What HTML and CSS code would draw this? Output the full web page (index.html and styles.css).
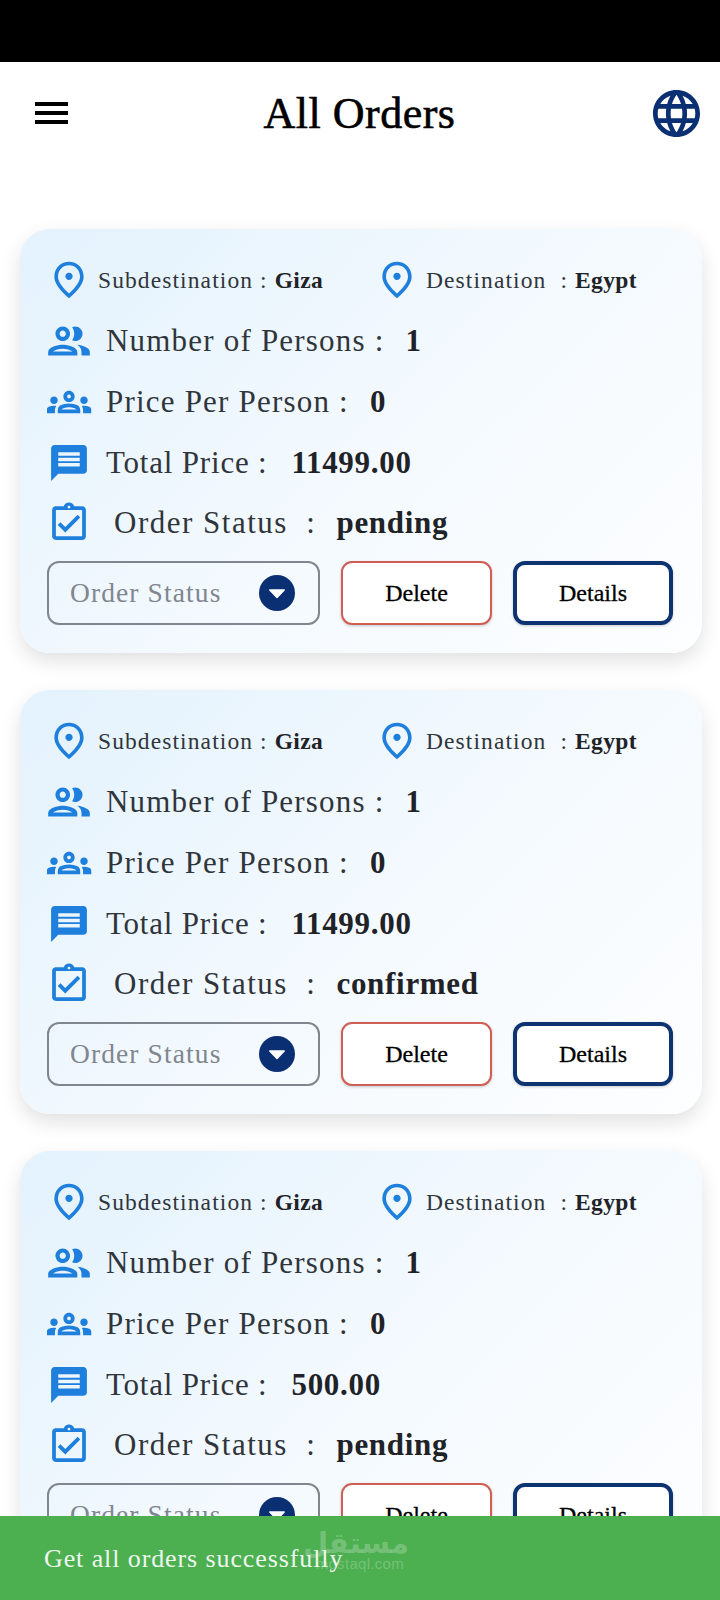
FILE: index.html
```html
<!DOCTYPE html>
<html lang="en">
<head>
<meta charset="utf-8">
<title>All Orders</title>
<link rel="stylesheet" href="styles.css">
</head>
<body>
<svg class="defs" width="0" height="0" aria-hidden="true">
  <symbol id="i-pin" viewBox="0 0 24 24"><path d="M12 12c-1.1 0-2-.9-2-2s.9-2 2-2 2 .9 2 2-.9 2-2 2zm6-1.8C18 6.57 15.35 4 12 4s-6 2.57-6 6.2c0 2.34 1.95 5.44 6 9.14 4.05-3.7 6-6.8 6-9.14zM12 2c4.2 0 8 3.22 8 8.2 0 3.32-2.67 7.25-8 11.8-5.33-4.55-8-8.48-8-11.8C4 5.22 7.8 2 12 2z"/></symbol>
  <symbol id="i-group" viewBox="0 0 24 24"><path d="M9 13.75c-2.34 0-7 1.17-7 3.5V19h14v-1.75c0-2.33-4.66-3.5-7-3.5zM4.34 17c.84-.58 2.87-1.25 4.66-1.25s3.82.67 4.66 1.25H4.34zM9 12c1.93 0 3.5-1.57 3.5-3.5S10.93 5 9 5 5.5 6.57 5.5 8.5 7.07 12 9 12zm0-5c.83 0 1.5.67 1.5 1.5S9.83 10 9 10s-1.5-.67-1.5-1.5S8.17 7 9 7zm7.04 6.81c1.16.84 1.96 1.96 1.96 3.44V19h4v-1.75c0-2.02-3.5-3.17-5.96-3.44zM15 12c1.93 0 3.5-1.57 3.5-3.5S16.93 5 15 5c-.54 0-1.04.13-1.5.35.63.89 1 1.98 1 3.15s-.37 2.26-1 3.15c.46.22.96.35 1.5.35z"/></symbol>
  <symbol id="i-groups" viewBox="0 0 24 24"><path d="M4 13c1.1 0 2-.9 2-2s-.9-2-2-2-2 .9-2 2 .9 2 2 2zm1.13 1.1c-.37-.06-.74-.1-1.13-.1-.99 0-1.93.21-2.78.58C.48 14.9 0 15.62 0 16.43V18h4.5v-1.61c0-.83.23-1.61.63-2.29zM20 13c1.1 0 2-.9 2-2s-.9-2-2-2-2 .9-2 2 .9 2 2 2zm4 3.43c0-.81-.48-1.53-1.22-1.85-.85-.37-1.79-.58-2.78-.58-.39 0-.76.04-1.13.1.4.68.63 1.46.63 2.29V18H24v-1.57zm-7.76-2.78c-1.17-.52-2.61-.9-4.24-.9-1.63 0-3.07.39-4.24.9C6.68 14.13 6 15.21 6 16.39V18h12v-1.61c0-1.18-.68-2.26-1.76-2.74zM8.07 16c.09-.23.13-.39.91-.69.97-.38 1.99-.56 3.02-.56s2.05.18 3.02.56c.77.3.81.46.91.69H8.07zM12 8c.55 0 1 .45 1 1s-.45 1-1 1-1-.45-1-1 .45-1 1-1m0-2c-1.66 0-3 1.34-3 3s1.34 3 3 3 3-1.34 3-3-1.34-3-3-3z"/></symbol>
  <symbol id="i-message" viewBox="0 0 24 24"><path d="M20 2H4c-1.1 0-1.99.9-1.99 2L2 22l4-4h14c1.1 0 2-.9 2-2V4c0-1.1-.9-2-2-2zm-2 12H6v-2h12v2zm0-3H6V9h12v2zm0-3H6V6h12v2z"/></symbol>
  <symbol id="i-check" viewBox="0 0 24 24"><path d="M18 9l-1.41-1.42L10 14.17l-2.59-2.58L6 13l4 4zm1-6h-4.18C14.4 1.84 13.3 1 12 1c-1.3 0-2.4.84-2.82 2H5c-.14 0-.27.01-.4.04-.39.08-.74.28-1.01.55-.18.18-.33.4-.43.64-.1.23-.16.49-.16.77v14c0 .27.06.54.16.78s.25.45.43.64c.27.27.62.47 1.01.55.13.02.26.03.4.03h14c1.1 0 2-.9 2-2V5c0-1.1-.9-2-2-2zm-7-.25c.41 0 .75.34.75.75s-.34.75-.75.75-.75-.34-.75-.75.34-.75.75-.75zM19 19H5V5h14v14z"/></symbol>
  <symbol id="i-caret" viewBox="0 0 24 24"><circle cx="12" cy="12" r="12" fill="#0a2f73"/><path d="M7.2 10h9.6L12 15z" fill="#fff" stroke="#fff" stroke-width="1" stroke-linejoin="round"/></symbol>
</svg>

<div class="status-bar"></div>

<header class="app-bar">
  <div class="menu"><span></span><span></span><span></span></div>
  <h1 class="title">All Orders</h1>
  <svg class="globe" viewBox="2 2 20 20"><path d="M11.99 2C6.47 2 2 6.48 2 12s4.47 10 9.99 10C17.52 22 22 17.52 22 12S17.52 2 11.99 2zm6.93 6h-2.95c-.32-1.25-.78-2.45-1.38-3.56 1.84.63 3.37 1.91 4.33 3.56zM12 4.04c.83 1.2 1.48 2.53 1.91 3.96h-3.82c.43-1.43 1.08-2.76 1.91-3.96zM4.26 14C4.1 13.36 4 12.69 4 12s.1-1.36.26-2h3.38c-.08.66-.14 1.32-.14 2 0 .68.06 1.34.14 2H4.26zm.82 2h2.95c.32 1.25.78 2.45 1.38 3.56-1.84-.63-3.37-1.9-4.33-3.56zm2.95-8H5.08c.96-1.66 2.49-2.93 4.33-3.56C8.81 5.55 8.35 6.75 8.03 8zM12 19.96c-.83-1.2-1.48-2.53-1.91-3.96h3.82c-.43 1.43-1.08 2.76-1.91 3.96zM14.34 14H9.66c-.09-.66-.16-1.32-.16-2 0-.68.07-1.35.16-2h4.68c.09.65.16 1.32.16 2 0 .68-.07 1.34-.16 2zm.25 5.56c.6-1.11 1.06-2.31 1.38-3.56h2.95c-.96 1.65-2.49 2.93-4.33 3.56zM16.36 14c.08-.66.14-1.32.14-2 0-.68-.06-1.34-.14-2h3.38c.16.64.26 1.31.26 2s-.1 1.36-.26 2h-3.38z"/></svg>
</header>

<main class="orders">
  <article class="card">
    <div class="row places">
      <div class="place"><svg class="ic ic-pin"><use href="#i-pin"/></svg><span class="small">Subdestination : <b>Giza</b></span></div>
      <div class="place"><svg class="ic ic-pin"><use href="#i-pin"/></svg><span class="small">Destination &nbsp;: <b>Egypt</b></span></div>
    </div>
    <div class="row"><svg class="ic ic-group"><use href="#i-group"/></svg><span class="label">Number of Persons :</span><b class="value">1</b></div>
    <div class="row"><svg class="ic ic-groups"><use href="#i-groups"/></svg><span class="label">Price Per Person :</span><b class="value">0</b></div>
    <div class="row total"><svg class="ic ic-message"><use href="#i-message"/></svg><span class="label label-tight">Total Price :</span><b class="value">11499.00</b></div>
    <div class="row status"><svg class="ic ic-check"><use href="#i-check"/></svg><span class="label label-wide">Order Status &nbsp;:</span><b class="value">pending</b></div>
    <div class="controls">
      <div class="select"><span>Order Status</span><svg class="caret"><use href="#i-caret"/></svg></div>
      <button class="btn btn-delete">Delete</button>
      <button class="btn btn-details">Details</button>
    </div>
  </article>

  <article class="card">
    <div class="row places">
      <div class="place"><svg class="ic ic-pin"><use href="#i-pin"/></svg><span class="small">Subdestination : <b>Giza</b></span></div>
      <div class="place"><svg class="ic ic-pin"><use href="#i-pin"/></svg><span class="small">Destination &nbsp;: <b>Egypt</b></span></div>
    </div>
    <div class="row"><svg class="ic ic-group"><use href="#i-group"/></svg><span class="label">Number of Persons :</span><b class="value">1</b></div>
    <div class="row"><svg class="ic ic-groups"><use href="#i-groups"/></svg><span class="label">Price Per Person :</span><b class="value">0</b></div>
    <div class="row total"><svg class="ic ic-message"><use href="#i-message"/></svg><span class="label label-tight">Total Price :</span><b class="value">11499.00</b></div>
    <div class="row status"><svg class="ic ic-check"><use href="#i-check"/></svg><span class="label label-wide">Order Status &nbsp;:</span><b class="value">confirmed</b></div>
    <div class="controls">
      <div class="select"><span>Order Status</span><svg class="caret"><use href="#i-caret"/></svg></div>
      <button class="btn btn-delete">Delete</button>
      <button class="btn btn-details">Details</button>
    </div>
  </article>

  <article class="card">
    <div class="row places">
      <div class="place"><svg class="ic ic-pin"><use href="#i-pin"/></svg><span class="small">Subdestination : <b>Giza</b></span></div>
      <div class="place"><svg class="ic ic-pin"><use href="#i-pin"/></svg><span class="small">Destination &nbsp;: <b>Egypt</b></span></div>
    </div>
    <div class="row"><svg class="ic ic-group"><use href="#i-group"/></svg><span class="label">Number of Persons :</span><b class="value">1</b></div>
    <div class="row"><svg class="ic ic-groups"><use href="#i-groups"/></svg><span class="label">Price Per Person :</span><b class="value">0</b></div>
    <div class="row total"><svg class="ic ic-message"><use href="#i-message"/></svg><span class="label label-tight">Total Price :</span><b class="value">500.00</b></div>
    <div class="row status"><svg class="ic ic-check"><use href="#i-check"/></svg><span class="label label-wide">Order Status &nbsp;:</span><b class="value">pending</b></div>
    <div class="controls">
      <div class="select"><span>Order Status</span><svg class="caret"><use href="#i-caret"/></svg></div>
      <button class="btn btn-delete">Delete</button>
      <button class="btn btn-details">Details</button>
    </div>
  </article>
</main>

<div class="toast">
  <span class="toast-text">Get all orders successfully</span>
  <div class="watermark"><span class="wm-ar">مستقل</span><span class="wm-en">mostaql.com</span></div>
</div>
</body>
</html>
```

FILE: styles.css
```css
* { box-sizing: border-box; }

html, body {
  margin: 0;
  height: 1600px;
  overflow: hidden;
  background: #fff;
}

body {
  position: relative;
  display: flex;
  flex-direction: column;
  font-family: "Liberation Serif", "Times New Roman", serif;
  color: #1f2328;
}

.defs { position: absolute; }

.status-bar {
  height: 62px;
  flex: none;
  background: #000;
}

.app-bar {
  height: 102px;
  flex: none;
  display: flex;
  align-items: center;
  justify-content: space-between;
  padding: 0 20px 0 35px;
}

.menu {
  width: 33px;
  display: flex;
  flex-direction: column;
  gap: 5px;
}

.menu span {
  height: 4px;
  background: #000;
}

.title {
  margin: 0 0 0 -2px;
  font-size: 44px;
  font-weight: 400;
  letter-spacing: 0.5px;
  color: #000;
  -webkit-text-stroke: 0.6px #000;
}

.globe {
  width: 47px;
  height: 47px;
  fill: #0a2f73;
}

.orders {
  flex: none;
  padding: 65px 18px 0 20px;
  display: flex;
  flex-direction: column;
  gap: 37px;
}

.card {
  height: 424px;
  flex: none;
  padding: 21px 28px 0 24px;
  border-radius: 30px;
  background: linear-gradient(135deg, #e3f2fd 0%, #f3f9fe 50%, #fdfeff 100%);
  box-shadow: 0 8px 20px rgba(0, 0, 0, 0.12);
}

.row {
  height: 60.75px;
  display: flex;
  align-items: center;
  gap: 12px;
}

.places {
  display: grid;
  grid-template-columns: 316px 1fr;
}

.place {
  display: flex;
  align-items: center;
  gap: 4px;
}

.status { gap: 20px; }

.ic {
  flex: none;
  width: 50px;
  height: 50px;
  fill: #1e7fdc;
}

.ic-pin { height: 44px; }

.ic-groups { padding: 0 2.5px; }

.ic-message { padding: 3.5px; }

.ic-check { padding: 2.5px; }

.small {
  font-size: 23.5px;
  letter-spacing: 1.1px;
  color: #30353b;
}

.small b {
  letter-spacing: 0.4px;
  color: #1f2328;
}

.label {
  font-size: 31px;
  letter-spacing: 1.2px;
  color: #30353b;
}

.label-tight { letter-spacing: 0.8px; }

.label-wide { letter-spacing: 1.5px; }

.value {
  margin-left: 9px;
  font-size: 31px;
  letter-spacing: 0.7px;
  color: #1f2328;
}

.total .value { margin-left: 12px; }

.status .value { margin-left: 0; }

.controls {
  margin-top: 7.25px;
  height: 64px;
  display: flex;
  gap: 21px;
  margin-left: 3px;
}

.select {
  width: 273px;
  padding: 0 23px 0 21px;
  display: flex;
  align-items: center;
  justify-content: space-between;
  border: 2px solid #80868f;
  border-radius: 12px;
  font-size: 27.5px;
  letter-spacing: 1.1px;
  color: #80868f;
}

.caret {
  width: 36px;
  height: 36px;
}

.btn {
  height: 64px;
  padding: 0;
  background: #fff;
  font-family: inherit;
  font-size: 24px;
  color: #000;
  -webkit-text-stroke: 0.3px #000;
}

.btn-delete {
  width: 151px;
  border: 2px solid #cf5f55;
  border-radius: 11px;
  box-shadow: 0 1px 3px rgba(0, 0, 0, 0.2);
}

.btn-details {
  width: 160px;
  border: 4px solid #0d3470;
  border-radius: 12px;
  box-shadow: 0 1px 3px rgba(0, 0, 0, 0.2);
}

.toast {
  position: absolute;
  left: 0;
  right: 0;
  bottom: 0;
  height: 84px;
  padding: 2px 0 0 44px;
  display: flex;
  align-items: center;
  background: #4caf50;
}

.toast-text {
  position: relative;
  z-index: 1;
  font-size: 26px;
  letter-spacing: 0.9px;
  color: #eef7ee;
}

.watermark {
  position: absolute;
  left: 308px;
  top: 13px;
  width: 96px;
  display: flex;
  flex-direction: column;
  align-items: center;
  font-family: "DejaVu Sans", sans-serif;
  color: rgba(255, 255, 255, 0.24);
}

.wm-ar {
  font-size: 29px;
  line-height: 28px;
  font-weight: 700;
}

.wm-en {
  font-family: "Liberation Sans", sans-serif;
  align-self: flex-end;
  font-size: 15px;
  line-height: 14px;
  letter-spacing: 0.3px;
}
```
